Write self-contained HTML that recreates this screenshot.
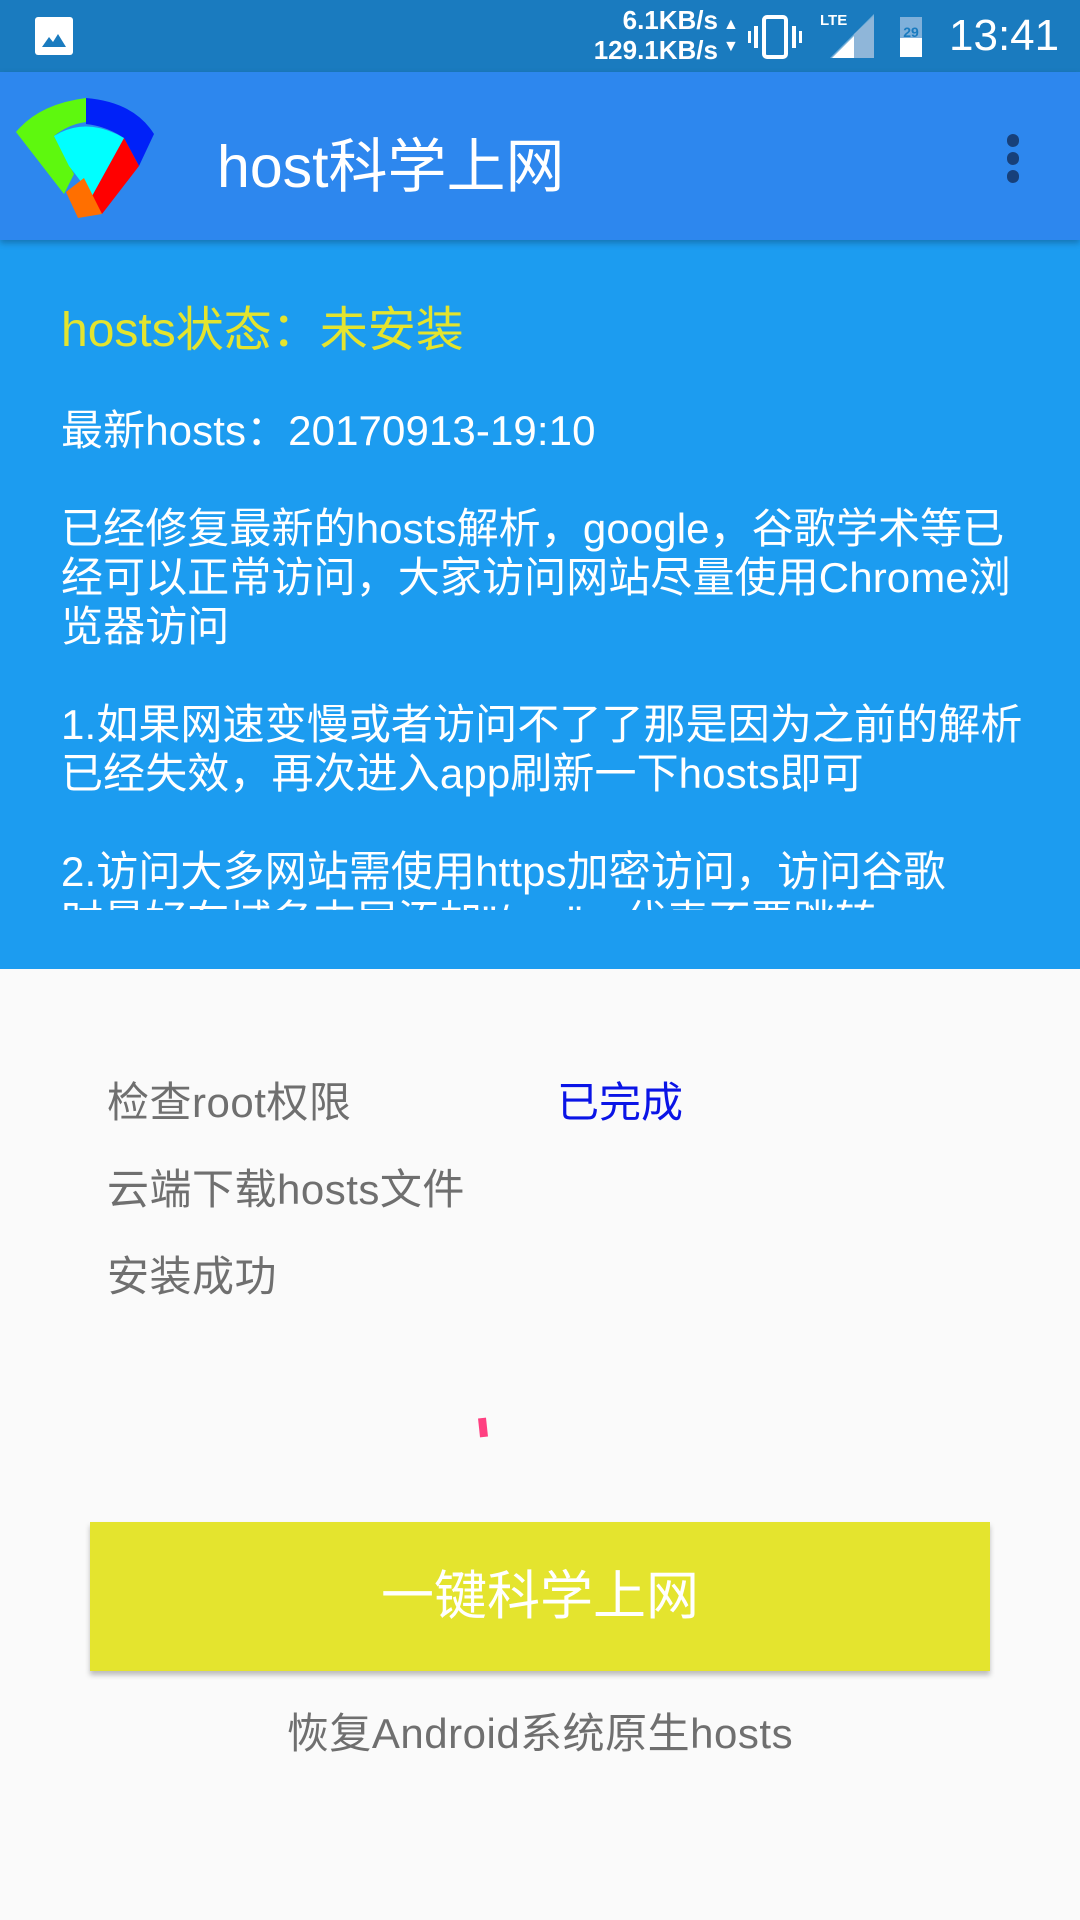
<!DOCTYPE html>
<html><head><meta charset="utf-8"><style>
*{margin:0;padding:0;box-sizing:border-box}
body{width:1080px;height:1920px;background:#fafafa;position:relative;overflow:hidden;font-family:"Liberation Sans","Noto Sans CJK SC",sans-serif}
.abs{position:absolute;white-space:nowrap}
#sb{position:absolute;left:0;top:0;width:1080px;height:72px;background:#1a7bbf;color:#fff}
#tb{position:absolute;left:0;top:72px;width:1080px;height:168px;background:#2d87ee;box-shadow:0 3px 6px rgba(0,0,0,.25);z-index:2}
#blue{position:absolute;left:0;top:240px;width:1080px;height:729px;background:#1c9cf0;overflow:hidden}
#txt{position:absolute;left:61px;top:0;width:1019px;height:670px;overflow:hidden;color:#fff;font-size:42px;line-height:49px;letter-spacing:0.1px;white-space:nowrap}
.lab{font-size:42px;color:#6f6f6f;letter-spacing:0.5px}
</style></head><body>
<div id="sb">
 <div class="abs" style="left:35px;top:17px;width:38px;height:38px;background:#fff;border-radius:3px"><svg width="38" height="38"><path d="M7 30 L14 20 L18 25 L23 17 L31 30 Z" fill="#1a7bbf"/></svg></div>
 <div class="abs" style="right:362px;top:5px;font-size:26px;font-weight:bold;text-align:right;line-height:30px">6.1KB/s<br>129.1KB/s</div>
 <div class="abs" style="left:723px;top:14px;font-size:16px;line-height:22px">▲<br>▼</div>
 <svg class="abs" style="left:748px;top:14px" width="56" height="46"><rect x="16" y="3" width="22" height="40" rx="3" fill="none" stroke="#fff" stroke-width="4"/><rect x="6" y="12" width="4" height="22" fill="#fff"/><rect x="44" y="12" width="4" height="22" fill="#fff"/><rect x="0" y="17" width="3" height="12" fill="#fff"/><rect x="51" y="17" width="3" height="12" fill="#fff"/></svg>
 <div class="abs" style="left:820px;top:12px;font-size:15px;font-weight:bold">LTE</div>
 <svg class="abs" style="left:830px;top:14px" width="44" height="44"><path d="M44 0 L44 44 L0 44 Z" fill="#fff" opacity=".4"/><path d="M24 22 L24 44 L2 44 Z" fill="#fff"/><path d="M24 20 L44 2 L44 44 L24 44Z" fill="#8fb6d9"/></svg>
 <div class="abs" style="left:900px;top:17px;width:22px;height:40px;background:#fff;border-top:4px solid #7fb0da"><div style="background:#7fb0da;height:17px"></div><div style="font-size:14px;color:#1a7bbf;text-align:center;margin-top:-14px;font-weight:bold">29</div></div>
 <div class="abs" style="left:949px;top:11px;font-size:44px">13:41</div>
</div>
<div id="tb">
 <svg class="abs" style="left:14px;top:24px" width="145" height="125" viewBox="0 0 145 125">
  <path d="M72 2 Q25 8 2 36 L50 98 L60 78 L40 40 Q55 28 72 26 Z" fill="#5ef80e"/>
  <path d="M72 2 Q120 6 140 38 L125 70 L110 42 Q92 30 72 28 Z" fill="#0021f8"/>
  <path d="M110 42 L125 70 L88 118 L78 100 Z" fill="#ff0000"/>
  <path d="M40 40 Q72 20 110 42 L78 100 L55 70 Z" fill="#00ffff"/>
  <path d="M52 96 L70 82 L88 118 L64 122 Z" fill="#ff6f00"/>
 </svg>
 <div class="abs" style="left:217px;top:47px;font-size:59px;color:#fff">host科学上网</div>
 <div class="abs" style="left:1007px;top:62px;width:12px;height:13px;border-radius:6px;background:#17407a"></div>
 <div class="abs" style="left:1007px;top:80px;width:12px;height:13px;border-radius:6px;background:#17407a"></div>
 <div class="abs" style="left:1007px;top:98px;width:12px;height:13px;border-radius:6px;background:#17407a"></div>
</div>
<div id="blue">
 <div class="abs" style="left:61px;top:50px;font-size:48px;color:#e4e42e">hosts状态：未安装</div>
 <div id="txt" style="top:166px">
  最新hosts：20170913-19:10<br><br>
  已经修复最新的hosts解析，google，谷歌学术等已<br>经可以正常访问，大家访问网站尽量使用Chrome浏<br>览器访问<br><br>
  1.如果网速变慢或者访问不了了那是因为之前的解析<br>已经失效，再次进入app刷新一下hosts即可<br><br>
  2.访问大多网站需使用https加密访问，访问谷歌<br>时最好在域名末尾添加"/ncr"，代表不要跳转
 </div>
</div>
<div style="position:absolute;left:61px;top:910px;width:1019px;height:59px;background:#1c9cf0"></div>
<div class="abs lab" style="left:107px;top:1069px">检查root权限</div>
<div class="abs" style="left:557px;top:1069px;font-size:42px;color:#0a14e6">已完成</div>
<div class="abs lab" style="left:107px;top:1156px">云端下载hosts文件</div>
<div class="abs lab" style="left:107px;top:1243px">安装成功</div>
<div class="abs" style="left:479px;top:1418px;width:8px;height:19px;background:#ff4081;transform:rotate(-6deg)"></div>
<div class="abs" style="left:90px;top:1522px;width:900px;height:149px;background:#e4e42e;box-shadow:0 4px 5px rgba(0,0,0,.25);color:#fff;font-size:53px;text-align:center;line-height:149px">一键科学上网</div>
<div class="abs" style="left:0;width:1080px;top:1700px;text-align:center;font-size:42px;letter-spacing:0.5px;color:#6f6f6f">恢复Android系统原生hosts</div>
</body></html>
